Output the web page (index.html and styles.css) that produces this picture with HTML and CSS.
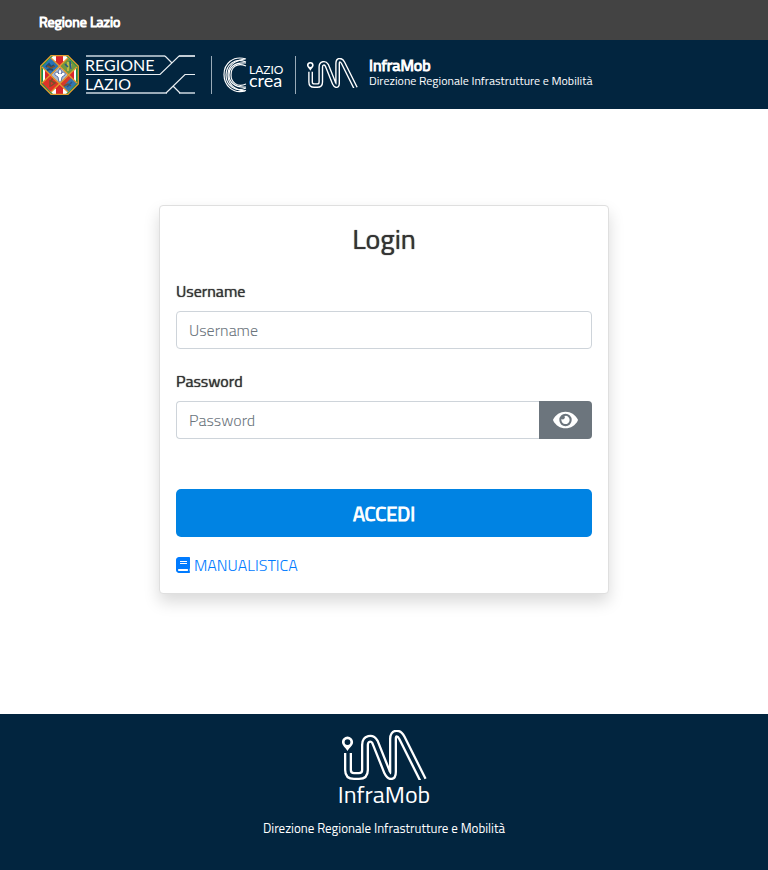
FILE: index.html
```html
<!DOCTYPE html>
<html lang="it">

<head>
    <meta charset="UTF-8">
    <meta name="viewport" content="width=device-width, initial-scale=1.0">
    <title>InfraMob - Login</title>
    <link rel="stylesheet" href="styles.css">
</head>

<body>

    <!-- shared InfraMob logo -->
    <svg class="symbols" aria-hidden="true">
        <symbol id="im" viewBox="0 0 85 50">
            <g fill="none" stroke-linejoin="round">
                <path stroke="#fff" stroke-width="8" d="M6 23V40Q6 46 12 46H17Q23 46 23 40V15C23 8 30 7 33 12L45 42C48 48 51 47 51 42V9C51 2 57 2 60 8L81 50"/>
                <path stroke="#02253f" stroke-width="3.4" d="M6 22V40Q6 46 12 46H17Q23 46 23 40V15C23 8 30 7 33 12L45 42C48 48 51 47 51 42V9C51 2 57 2 60 8L82 52"/>
            </g>
            <path fill="#fff" fill-rule="evenodd" d="M5.500 6.500a5.600 5.600 0 0 0-5.600 5.600c0 3.200 3 5 5.600 9c2.600-4 5.600-5.800 5.600-9a5.600 5.600 0 0 0-5.600-5.600zm0 2.700a2.900 2.900 0 1 1 0 5.800a2.900 2.900 0 0 1 0-5.800z"/>
        </symbol>
    </svg>

    <div class="topbar">
        <a href="#">Regione Lazio</a>
    </div>

    <header class="header">
        <svg class="logoRegione" viewBox="0 0 156 40" role="img" aria-label="Regione Lazio">
            <path fill="#14904a" d="M12 .7H29L39.300 11V29L29 39.300H12L1.700 29V11z"/>
            <path fill="#fff" d="M14 1H27L37 12V28L27 39H14L4 28V12z"/>
            <path fill="#d8262c" d="M17 1H24V6L35 16V24L24 34V39H17V34L6 24V16L17 6z"/>
            <path fill="#2873b6" d="M12 3L21 11L12 20L3 12z"/>
            <path fill="#70983e" d="M29 3L38 12L29 20L21 11z"/>
            <path fill="#df3328" d="M3 28L12 20L21 29L12 37z"/>
            <path fill="#3676ae" d="M21 29L29 20L38 28L29 37z"/>
            <path fill="#a9bad2" d="M21 11L29 20L21 29L12 20z"/>
            <path fill="#d83a2a" d="M21 29L29 20L32 23L24 32z"/>
            <path fill="none" stroke="#23496e" stroke-width="2" d="M7 12l3-3 2 3 3-2M8 15l3-1 3 1"/>
            <path fill="none" stroke="#7a512c" stroke-width="1.500" d="M8 11l4 2 4-2M11 25v7M14 23l-2 3 4 2-4 3M25 31l4-2 3 2"/>
            <path fill="none" stroke="#d8c14a" stroke-width="1.500" d="M29 7v9M32 9v5"/>
            <path fill="none" stroke="#25568a" stroke-width="1.500" d="M26 9l3 3M31 6l1 8M28 32l5-5"/>
            <path fill="#fff" stroke="#52689a" stroke-width=".9" d="M21 13l2 4-1 2c1-3 5-2 4 1l-3 2-1 5h-2l-1-5-3-2c-1-3 3-4 4-1l-1-2z"/>
            <path fill="none" stroke="#e39a2d" stroke-width="1.300" d="M12 .7H29L39.300 11V29L29 39.300H12L1.700 29V11zM3 12L29 37M12 3L38 28M29 3L3 28M38 12L12 37"/>
            <g fill="none" stroke="#e9eef2" stroke-width="1.200">
                <path stroke="#9aabb8" stroke-width="1.800" d="M47 1H126M140 1h16M47 38H128M140 38h16"/>
                <path d="M126 1L133 8M156 1H140L121 19.500H47M156 19.500H146L127 38M134 31L141 38"/>
            </g>
            <g class="logoText" font-size="16">
                <text x="46" y="16">REGIONE</text>
                <text x="46" y="35">LAZIO</text>
            </g>
        </svg>
        <span class="separator"></span>
        <svg class="logoCrea" viewBox="0 0 61 36" role="img" aria-label="Lazio Crea">
            <g fill="none" stroke="#fff" stroke-width="1.200">
                <path d="M23 2C10-2 1 7 1 17.500S10 38 23 33.500"/>
                <path d="M23 5C12 0 3 8 3 18S12 36 23 31"/>
                <path d="M22 2C9 4 5 10 5 18S10 33 22 34"/>
                <path d="M23 9C13 5 8 11 8 18S14 31 23 27"/>
                <path d="M23 6C11 5 6 11 6 18S12 31 23 30"/>
            </g>
            <g class="logoText">
                <text x="26" y="17" font-size="12">LAZIO</text>
                <text x="26" y="30" font-size="18">crea</text>
            </g>
        </svg>
        <span class="separator"></span>
        <svg class="logoIm" aria-hidden="true"><use href="#im"/></svg>
        <div class="brand">
            <strong>InfraMob</strong>
            <span>Direzione Regionale Infrastrutture e Mobilità</span>
        </div>
    </header>

    <main>
        <form class="card">
            <h1>Login</h1>

            <div class="inputbox">
                <label for="username">Username</label>
                <input type="text" name="username" id="username" placeholder="Username">
            </div>

            <div class="inputbox">
                <label for="password">Password</label>
                <div class="inputgroup">
                    <input type="password" name="password" id="password" placeholder="Password">
                    <button type="button" class="showPassword" aria-label="Mostra password">
                        <svg viewBox="0 0 576 512" aria-hidden="true">
                            <path fill="#fff" d="M572.520 241.400C518.290 135.590 410.930 64 288 64S57.680 135.640 3.480 241.410a32.350 32.350 0 0 0 0 29.190C57.710 376.410 165.070 448 288 448s230.320-71.640 284.520-177.410a32.350 32.350 0 0 0 0-29.190zM288 400a144 144 0 1 1 144-144 143.930 143.930 0 0 1-144 144zm0-240a95.310 95.310 0 0 0-25.310 3.790 47.850 47.850 0 0 1-66.900 66.900A95.780 95.780 0 1 0 288 160z"/>
                        </svg>
                    </button>
                </div>
            </div>

            <button type="submit" class="submit">ACCEDI</button>

            <a class="manual" href="#">
                <svg viewBox="0 0 448 512" aria-hidden="true">
                    <path fill="currentColor" d="M448 360V24c0-13.300-10.700-24-24-24H96C43 0 0 43 0 96v320c0 53 43 96 96 96h328c13.300 0 24-10.700 24-24v-16c0-7.500-3.500-14.300-8.900-18.700-4.200-15.400-4.200-59.300 0-74.700 5.400-4.300 8.900-11.100 8.900-18.600zM128 134c0-3.300 2.700-6 6-6h212c3.300 0 6 2.700 6 6v20c0 3.300-2.700 6-6 6H134c-3.300 0-6-2.700-6-6v-20zm0 64c0-3.300 2.700-6 6-6h212c3.300 0 6 2.700 6 6v20c0 3.300-2.700 6-6 6H134c-3.300 0-6-2.700-6-6v-20zm253.400 250H96c-17.700 0-32-14.300-32-32 0-17.600 14.400-32 32-32h285.400c-1.900 17.100-1.900 46.900 0 64z"/>
                </svg>
                MANUALISTICA
            </a>
        </form>
    </main>

    <footer class="footer">
        <svg class="footerLogo" aria-hidden="true"><use href="#im"/></svg>
        <p class="footerName">InfraMob</p>
        <p class="footerText">Direzione Regionale Infrastrutture e Mobilità</p>
    </footer>

</body>

</html>
```

FILE: styles.css
```css
* {
    margin: 0;
    padding: 0;
    box-sizing: border-box;
}

body {
    display: flex;
    flex-direction: column;
    min-height: 100vh;
    font-family: "Titillium Web", Roboto, sans-serif;
    font-size: 16px;
    line-height: 24px;
    color: #333;
    background: #fff;
}

.symbols {
    display: none;
}

/* regular letters with a thickened outline */
.card h1,
.inputbox label {
    font-weight: 400;
    text-shadow: 0 0 1px currentColor;
}

.topbar a,
.brand strong,
.submit {
    font-weight: 400;
    -webkit-text-stroke: 1px currentColor;
}

.topbar {
    height: 40px;
    padding: 9px 39px;
    background: #434343;
}

.topbar a {
    font-size: 14px;
    color: #fff;
    text-decoration: none;
}

.header {
    display: flex;
    align-items: center;
    padding: 15px 39px 14px;
    color: #fff;
    background: #02253f;
}

.header svg {
    flex-shrink: 0;
}

.logoRegione {
    width: 156px;
    height: 40px;
    margin-right: 16px;
}

.logoText {
    font-family: Lato, sans-serif;
    fill: #fff;
}

.separator {
    width: 1px;
    height: 38px;
    background: #9aabb8;
}

.logoCrea {
    width: 61px;
    height: 36px;
    margin: 0 11px;
}

.logoIm {
    width: 51px;
    height: 30px;
    margin: 0 11px 4px;
}

.brand {
    line-height: 16px;
    margin-bottom: 4px;
}

.brand strong,
.brand span {
    display: block;
}

.brand span {
    font-size: 12px;
}

main {
    flex: 1;
    padding: 96px 16px 120px;
}

.card {
    max-width: 450px;
    margin: 0 auto;
    padding: 16px;
    border: 1px solid #dfdfdf;
    border-radius: 4px;
    background: #fff;
    box-shadow: 0 8px 16px rgba(0, 0, 0, 0.15);
}

.card h1 {
    margin-bottom: 23px;
    font-size: 28px;
    line-height: 34px;
    text-align: center;
}

.inputbox {
    margin-bottom: 20px;
}

.inputbox label {
    display: block;
    margin-bottom: 8px;
}

.inputbox input {
    width: 100%;
    height: 38px;
    padding: 6px 12px;
    border: 1px solid #ced4da;
    border-radius: 4px;
    font: inherit;
    font-weight: 300;
    color: #495057;
}

.inputbox input::placeholder {
    color: #6c757d;
}

.inputgroup {
    display: flex;
}

.inputgroup input {
    flex: 1;
    border-right: 0;
    border-radius: 4px 0 0 4px;
}

.showPassword {
    display: flex;
    align-items: center;
    justify-content: center;
    width: 53px;
    border: 0;
    border-radius: 0 4px 4px 0;
    background: #6c757d;
    cursor: pointer;
}

.showPassword svg {
    width: 25px;
    height: 22px;
}

.submit {
    display: block;
    width: 100%;
    height: 48px;
    margin: 50px 0 16px;
    border: 0;
    border-radius: 5px;
    font-family: inherit;
    font-size: 20px;
    color: #fff;
    background: #0083e3;
    cursor: pointer;
}

.manual {
    display: flex;
    align-items: center;
    gap: 4px;
    font-weight: 300;
    color: #007bff;
    text-decoration: none;
}

.manual svg {
    width: 14px;
    height: 16px;
}

.footer {
    padding: 16px 16px 30px;
    text-align: center;
    color: #fff;
    background: #02253f;
}

.footerLogo {
    display: block;
    width: 85px;
    height: 50px;
    margin: 0 auto;
}

.footerName {
    margin-bottom: 8px;
    font-size: 24px;
    line-height: 28px;
}

.footerText {
    font-size: 13px;
}
```
